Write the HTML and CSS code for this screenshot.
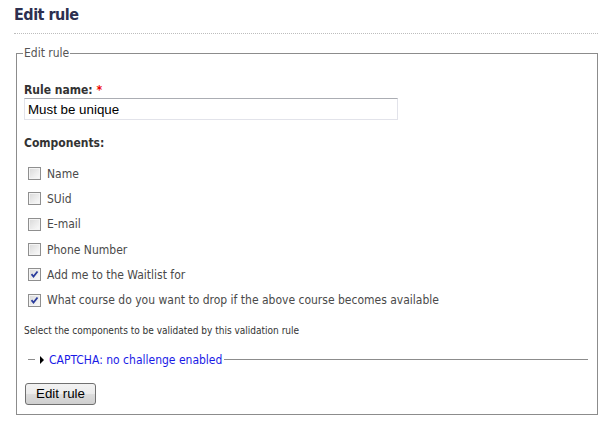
FILE: index.html
```html
<!DOCTYPE html>
<html lang="en">
<head>
<meta charset="utf-8">
<title>Edit rule</title>
<link rel="stylesheet" href="styles.css">
</head>
<body>
<div class="page">
  <h1 class="page-title">Edit rule</h1>
  <div class="title-rule"></div>

  <form class="rule-form" action="#">
    <fieldset class="box">
      <legend class="box-legend">Edit rule</legend>

      <div class="field">
        <label class="field-label" for="rule-name">Rule name: <span class="req">*</span></label>
        <input class="text-input" id="rule-name" type="text" value="Must be unique">
      </div>

      <div class="field field-components">
        <div class="field-label">Components:</div>
        <div class="checks">
          <label class="check"><input type="checkbox"><span>Name</span></label>
          <label class="check"><input type="checkbox"><span>SUid</span></label>
          <label class="check"><input type="checkbox"><span>E-mail</span></label>
          <label class="check"><input type="checkbox"><span>Phone Number</span></label>
          <label class="check"><input type="checkbox" checked><span>Add me to the Waitlist for</span></label>
          <label class="check"><input type="checkbox" checked><span>What course do you want to drop if the above course becomes available</span></label>
        </div>
        <div class="desc">Select the components to be validated by this validation rule</div>
      </div>

      <fieldset class="captcha">
        <legend class="captcha-legend"><span class="arrow"></span>CAPTCHA: no challenge enabled</legend>
      </fieldset>

      <button class="btn" type="button">Edit rule</button>
    </fieldset>
  </form>
</div>
</body>
</html>
```

FILE: styles.css
```css
html, body {
  margin: 0;
  padding: 0;
  background: #fff;
}

body {
  font-family: "DejaVu Sans Condensed", "DejaVu Sans", sans-serif;
  font-size: 12px;
  color: #4a4a4a;
}

.page {
  padding: 0 17px 0 14px;
}

.page-title {
  margin: 0;
  padding-top: 5px;
  font-size: 16px;
  line-height: 20px;
  font-weight: bold;
  letter-spacing: -0.5px;
  color: #2d3050;
}

.title-rule {
  margin-top: 8px;
  border-top: 1px dotted #bdbdbd;
  height: 0;
}

.rule-form {
  margin: 11px 0 0 2px;
}

.box {
  margin: 0;
  padding: 0 9px 9px 7px;
  border: 1px solid #8c8c8c;
  min-width: 0;
}

.box-legend {
  padding: 0 1px;
  margin-left: -1px;
  line-height: 16px;
  color: #555;
}

.field-label {
  display: block;
  font-weight: bold;
  line-height: 16px;
  color: #333;
}

.field {
  margin-top: 21px;
}

.req {
  color: #e00;
}

.text-input {
  display: block;
  box-sizing: border-box;
  width: 374px;
  height: 22px;
  margin: 0;
  padding: 1px 3px;
  border: 1px solid #e2e3ea;
  border-top-color: #abadb3;
  font-family: "Liberation Sans", Arial, sans-serif;
  font-size: 13.33px;
  color: #000;
  outline: none;
}

.field-components {
  margin-top: 15px;
}

.checks {
  margin-top: 10px;
  display: flex;
  flex-direction: column;
}

.check {
  display: flex;
  align-items: center;
  height: 25.3px;
  padding-left: 4px;
}

.check input {
  appearance: none;
  -webkit-appearance: none;
  width: 13px;
  height: 13px;
  margin: 0 6px 0 0;
  box-sizing: border-box;
  border: 1px solid #8f8f8f;
  background: linear-gradient(135deg, #d8d8d8 0%, #eeeeee 60%, #fbfbfb 100%);
  box-shadow: inset 0 0 0 1px #f4f4f4;
  flex: none;
}

.check input:checked {
  background:
    url("data:image/svg+xml,%3Csvg xmlns='http://www.w3.org/2000/svg' width='11' height='11' viewBox='0 0 11 11'%3E%3Cpath d='M2.5 5.2 L4.5 7.5 L8.5 2.5' fill='none' stroke='%232a3c9c' stroke-width='1.8'/%3E%3C/svg%3E") center/11px 11px no-repeat,
    linear-gradient(135deg, #d8d8d8 0%, #eeeeee 60%, #fbfbfb 100%);
}

.desc {
  margin-top: 11px;
  font-size: 10px;
  line-height: 14px;
  color: #333;
}

.captcha {
  margin: 14px 0 0 4px;
  padding: 0;
  border: 0;
  border-top: 1px solid #8c8c8c;
  min-width: 0;
}

.captcha-legend {
  display: flex;
  align-items: center;
  margin-left: 7px;
  padding: 0 2px 0 5px;
  line-height: 16px;
  color: #1a1ae6;
}

.arrow {
  width: 0;
  height: 0;
  border-style: solid;
  border-width: 4px 0 4px 4px;
  border-color: transparent transparent transparent #000;
  margin-right: 5px;
}

.btn {
  display: block;
  margin-top: 15px;
  margin-left: 1px;
  width: 71px;
  height: 22px;
  padding: 0;
  border: 1px solid #707070;
  border-radius: 3px;
  background: linear-gradient(#f2f2f2 0%, #ebebeb 50%, #dddddd 51%, #cfcfcf 100%);
  font-family: "Liberation Sans", Arial, sans-serif;
  font-size: 13.33px;
  color: #000;
}
```
